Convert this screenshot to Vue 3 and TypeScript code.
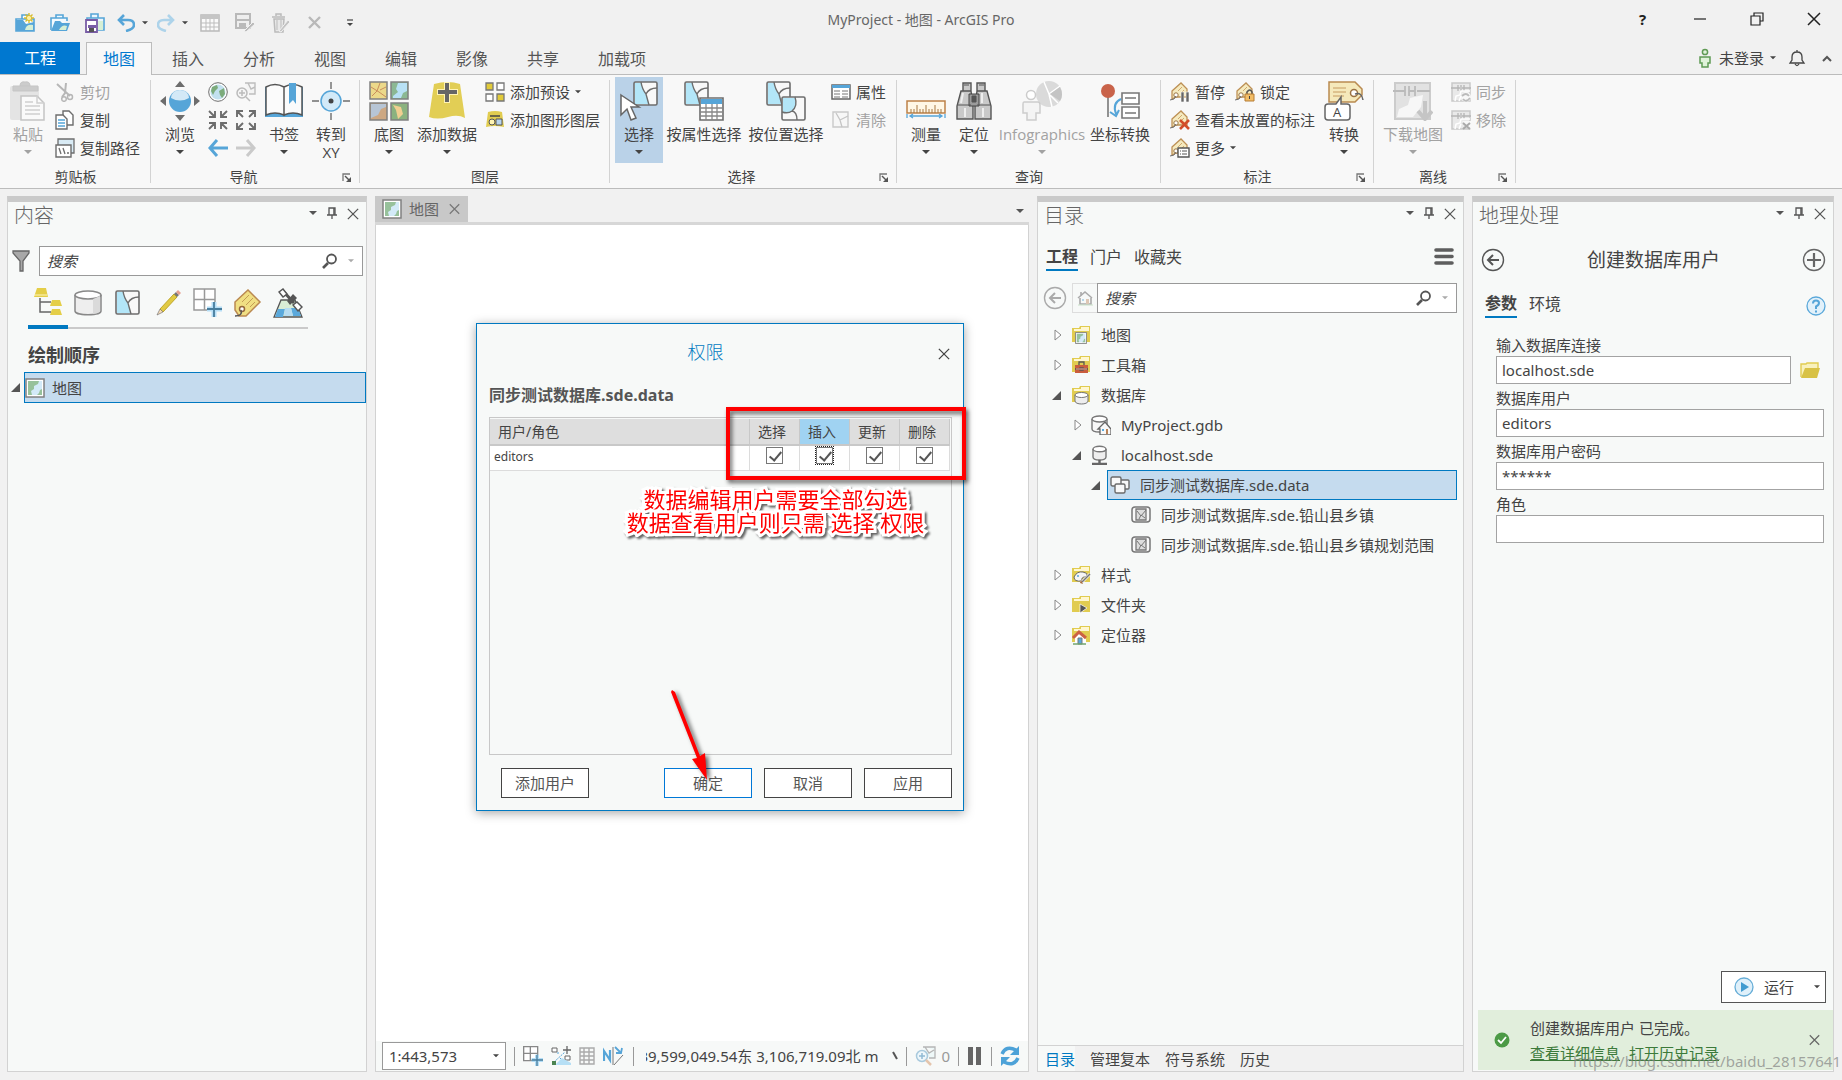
<script setup lang="ts">
import { computed, defineComponent, h, ref } from 'vue'

const B = '#56a5d8'
const G = '#6d6d6d'
const L = '#c9c9c9'
const Y = '#e1cc50'

type IconDef = [number, number, string]

const folder = `<path d="M1 3h7l1-2h10v16H1z" fill="${Y}"/><path d="M3 5h14v-2h-7" fill="none" stroke="#fff7d0" stroke-width="2"/>`
const tag = `<path d="M2 9L11 1l6 6v8H6l-4 2z" fill="#f5eabf" stroke="#bd9055" stroke-width="1.3"/><path d="M8 9l4-4M11 11l3-3" stroke="#cfa86d"/><circle cx="6" cy="13" r="2.2" fill="#fff" stroke="#9b7442"/><path d="M6 14q-1 4-6 4" fill="none" stroke="${G}"/>`
const part = (c: string) => `<rect x="1" y="1" width="23" height="23" rx="1.5" fill="#f8f8f8" stroke="${c}" stroke-width="1.6"/>`
const region = `${part(G)}<path d="M2 2h6q1 6 5 11l3 10H2z" fill="#b3e6f8"/><path d="M8 1q1 7 5 12l3 11M13 13q3-6 11-6" fill="none" stroke="${G}" stroke-width="1.4"/>`
const mapPic = `<rect x="1" y="1" width="18" height="18" fill="#fff" stroke="#808080" stroke-width="1.5"/><path d="M3 3h14v14H3z" fill="#d3eaf8"/><path d="M3 3h11l-1 3-4 2v3l-3 2 1 4H3zM17 11l-2 1-1 3-2 2h5z" fill="#97c19b"/>`
const offline = (c: string) => `<rect x="1" y="1" width="18" height="18" fill="#e9e9e9" stroke="${c}" stroke-width="1.5"/><path d="M0 6h7M13 6h7M7 3v6M10 3v6M13 3v6M7 6h2M11 6h2" stroke="#b5b5b5" stroke-width="1.3"/><path d="M4 19l1-5 4-1 1-4 9 0M8 19l2-5" fill="none" stroke="#fff" stroke-width="1.5"/>`

const icons: Record<string, IconDef> = {
  newProject: [20, 20, `<path d="M7 6V2h6v4M1 6h18v12H1z" fill="#f8fcff" stroke="${B}" stroke-width="1.6"/><path d="M1 7h7l3 4 8-2v9H1z" fill="${B}"/><path d="M10 17q1-6 8-5v5z" fill="#d6efd5"/><path d="M14 0v10M9 5h10M10.500 1.500l7 7M17.500 1.500l-7 7" stroke="#d7bd31" stroke-width="1.4"/><circle cx="14" cy="5" r="2.600" fill="#fff0a5" stroke="#d7bd31"/>`],
  openProject: [20, 20, `<path d="M6 5V2h7v3M1 17V5h16v3" fill="#f3faff" stroke="${B}" stroke-width="1.600"/><path d="M1 18L5 8h5l2 2h8l-3 8z" fill="${B}"/><path d="M9 17q3-6 8-4l-1 4z" fill="#d6efd5"/>`],
  saveProject: [20, 20, `<path d="M6 5V1h7v4M2 5h17v12H2z" fill="#eaf6fd" stroke="${B}" stroke-width="1.600"/><path d="M13 8h5v9h-5z" fill="#d6efd5"/><path d="M1 7h11v12H1z" fill="#fff" stroke="#795da6" stroke-width="1.800"/><path d="M3 12h8v3H3z" fill="#795da6"/><path d="M4 15h5v4H4z" fill="#555"/>`],
  undo: [18, 18, `<path d="M7 1L2 6l5 5M3 6h8q6 0 6 5 0 4-8 6" fill="none" stroke="${B}" stroke-width="2.600"/>`],
  redo: [18, 18, `<path d="M11 1l5 5-5 5M15 6H7Q1 6 1 11q0 4 8 6" fill="none" stroke="#add3ea" stroke-width="2.600"/>`],
  grid: [20, 18, `<path d="M1 1h18v16H1z" fill="#fafafa" stroke="#b9b9b9" stroke-width="1.500"/><path d="M1 1h18v4H1z" fill="#c5c5c5"/><path d="M6 5v12M10 5v12M14 5v12M1 9h18M1 13h18" stroke="#bdbdbd"/>`],
  saveEdit: [20, 20, `<path d="M1 1h14v14H1zM1 7h14" fill="#eee" stroke="#b9b9b9" stroke-width="2"/><path d="M4 10h7v5H4z" fill="#b9b9b9"/><path d="M9 18l9-9 2 2-9 8z" fill="#bbb" stroke="#f1f1f1"/>`],
  trash: [20, 20, `<path d="M2 4h13M6 3V1h5v2M4 6l1 13h8l1-13z" fill="#e8e8e8" stroke="#bbb" stroke-width="1.500"/><path d="M7 7v10M11 7v10" stroke="#bbb"/><path d="M9 18l9-11 2 2-9 10z" fill="#c3c3c3" stroke="#f1f1f1"/>`],
  discard: [14, 14, `<path d="M1 1l11 11M12 1L1 12" stroke="#b9b9b9" stroke-width="2.400"/>`],
  custom: [8, 8, `<path d="M1 1h6" stroke="#444" stroke-width="1.200"/><path d="M1 4h6L4 7z" fill="#444"/>`],
  caret: [8, 5, `<path d="M0 0h8L4 4z" fill="currentColor"/>`],
  min: [14, 14, `<path d="M1 7h12" stroke="#222" stroke-width="1.200"/>`],
  restore: [14, 14, `<path d="M4 4V1h9v8h-3M1 4h9v9H1z" fill="none" stroke="#222" stroke-width="1.200"/>`],
  close: [14, 14, `<path d="M1 1l12 12M13 1L1 13" stroke="currentColor" stroke-width="1.500"/>`],
  user: [16, 20, `<circle cx="8" cy="4" r="2.600" fill="#dff2d9" stroke="#5f9a54" stroke-width="1.500"/><path d="M3 9h10v6h-2v4H5v-4H3z" fill="#dff2d9" stroke="#5f9a54" stroke-width="1.500"/>`],
  bell: [18, 18, `<path d="M9 1v2M2 14h14l-2-3V8q0-5-5-5T4 8v3zM7 15q2 3 4 0" fill="none" stroke="#444" stroke-width="1.300"/>`],
  chevUp: [12, 8, `<path d="M2 7l4-4 4 4" fill="none" stroke="#555" stroke-width="2"/>`],
  paste: [40, 40, `<rect x="2" y="5" width="29" height="34" rx="2" fill="#e4e4e4"/><path d="M5 5h25v5H5zM12 5q0-5 5-4 5-1 5 4" fill="#ccc" stroke="#c5c5c5"/><path d="M13 15h16l7 7v17H13z" fill="#fafafa" stroke="#c4c4c4" stroke-width="1.500"/><path d="M29 15v7h7M17 21h8M17 25h15M17 29h15M17 33h15" fill="none" stroke="#cfcfcf" stroke-width="1.500"/>`],
  cut: [20, 20, `<path d="M2 2l13 12M11 1l-1 10-3 4" fill="none" stroke="#b7b7b7" stroke-width="2"/><circle cx="15" cy="15" r="2.500" fill="none" stroke="#b7b7b7" stroke-width="1.500"/><circle cx="9" cy="17" r="2.300" fill="none" stroke="#b7b7b7" stroke-width="1.500"/>`],
  copy: [20, 20, `<path d="M8 1h6l4 4v10H8z" fill="#fff" stroke="${G}" stroke-width="1.400"/><path d="M1 5h7l4 4v10H1z" fill="#fff" stroke="${G}" stroke-width="1.400"/><path d="M3 10h7M3 13h7M3 16h7" stroke="${B}" stroke-width="1.300"/>`],
  copyPath: [20, 20, `<path d="M3 1h16v14H3z" fill="#d9ebf5" stroke="${G}" stroke-width="1.300"/><path d="M1 7h15v12H1z" fill="#fff" stroke="${G}" stroke-width="1.400"/><path d="M4 10l2 6M8 10l2 6M12 15h2" stroke="${G}" stroke-width="1.300"/>`],
  explore: [40, 40, `<path d="M20 0l5 6H15zM20 40l5-6H15zM0 20l6-5v10zM40 20l-6-5v10z" fill="${G}"/><circle cx="20" cy="20" r="11" fill="${B}"/><path d="M11 17q1-8 9-8t9 8q-9 5-18 0z" fill="#d3e9f7"/>`],
  globe: [20, 20, `<circle cx="10" cy="10" r="9.300" fill="#fff" stroke="${G}"/><circle cx="10" cy="10" r="7.500" fill="#c2e1ef"/><path d="M4 5l5-2 1 3-3 3-2 4-2-4zM11 9l5-3 1 6-3 4-2-3z" fill="#7cab7b"/>`],
  zoomSel: [20, 20, `<path d="M9 1h10v11h-6M12 1l3 6 4-2" fill="#f4f4f4" stroke="#bdbdbd" stroke-width="1.400"/><circle cx="6" cy="11" r="5" fill="#f5f5f5" stroke="#bbb" stroke-width="1.500"/><path d="M3 11h6M6 8v6M10 15l4 4" stroke="#bbb" stroke-width="1.500"/>`],
  zoomIn: [20, 20, `<g fill="none" stroke="${G}" stroke-width="1.900"><path d="M1 1l6 6M7 1v6H1M19 1l-6 6M13 1v6h6M1 19l6-6M1 13h6v6M19 19l-6-6M13 19v-6h6"/></g>`],
  zoomOut: [20, 20, `<g fill="none" stroke="${G}" stroke-width="1.900"><path d="M1 1l6 6M1 7V1h6M19 1l-6 6M13 1h6v6M1 19l6-6M1 13v6h6M19 19l-6-6M13 19h6v-6"/></g>`],
  back: [20, 18, `<path d="M9 1L2 9l7 8M2 9h18" fill="none" stroke="${B}" stroke-width="3"/>`],
  forward: [20, 18, `<path d="M11 1l7 8-7 8M18 9H0" fill="none" stroke="#cacaca" stroke-width="3"/>`],
  book: [40, 40, `<path d="M1 6h38v30H1z" fill="${B}"/><path d="M2 6q9-5 18 0v28q-9-4-18 0zM38 6q-9-5-18 0v28q9-4 18 0z" fill="#fbfbfb" stroke="#555" stroke-width="1.500"/><path d="M25 2h7v21l-3-4-4 4z" fill="${B}"/>`],
  gotoXY: [40, 40, `<circle cx="20" cy="20" r="10" fill="#d3eaf8" stroke="${B}" stroke-width="1.500"/><circle cx="20" cy="20" r="2.500" fill="#444"/><path d="M20 1v7M20 32v7M1 20h7M32 20h7" stroke="${G}" stroke-width="1.400"/>`],
  basemap: [40, 40, `<g stroke="#808080" stroke-width="1.500"><path d="M1 1h17v17H1z" fill="#ecd98a"/><path d="M22 1h17v17H22z" fill="#8bb893"/><path d="M1 22h17v17H1z" fill="#cda883"/><path d="M22 22h17v17H22z" fill="#8bb27f"/></g><path d="M3 15l5-5 3-8M2 6l8 5 7 5M11 9l6-3" fill="none" stroke="#c98d5c"/><path d="M38 2h-9l-2 6 2 3-5 4v2h8l2-5 4-2z" fill="#b8e1f5"/><path d="M2 23h15v3l-5 2-3 6-7 3z" fill="#b7c5d5"/><path d="M24 24l8 2 2 7-5 5-2-9z" fill="#f1cf91"/>`],
  addData: [40, 40, `<path d="M7 3q14-4 26 0l5 34q-7-4-17-1-11 3-19 0z" fill="#e2ce55"/><path d="M20 1v21M10 11h21" stroke="#fff3b3" stroke-width="6"/><path d="M20 2v19M11 11h19" stroke="#666" stroke-width="4"/>`],
  preset: [20, 20, `<g stroke="#777" stroke-width="1.300"><path d="M1 1h7v7H1zM12 12h7v7h-7z" fill="#e1ca39"/><path d="M12 1h7v7h-7zM1 12h7v7H1z" fill="#fff"/></g>`],
  graphic: [20, 18, `<path d="M3 1q7-2 14 0l2 15q-9-2-18 0z" fill="${Y}"/><path d="M5 5h10" stroke="#444" stroke-width="1.500"/><circle cx="7" cy="11" r="3" fill="#fff4b2" stroke="#555"/><path d="M11 8h6v6h-6z" fill="#b9d5ed" stroke="#555"/>`],
  select: [40, 40, `<g transform="translate(14)">${region}</g><path d="M2 14l18 12-8 0 5 11-5 2-4-11-6 6z" fill="#fff" stroke="#666" stroke-width="1.500"/>`],
  selAttr: [40, 40, `${region}<path d="M16 17h23v22H16z" fill="#fff" stroke="${G}" stroke-width="1.600"/><path d="M17 18h21v5H17z" fill="${B}"/><path d="M22 23v16M28 23v16M33 23v16M16 27h23M16 31h23M16 35h23" stroke="#888" stroke-width="1.300"/>`],
  selLoc: [40, 40, `${region}<g transform="translate(15 15)">${part(G)}<path d="M2 2h12q2 9-3 13-4 3-9 1z" fill="#b3e6f8"/><path d="M14 1q3 9-3 14-4 3-10 1M11 15q5 1 5 9" fill="none" stroke="${G}" stroke-width="1.400"/></g>`],
  attributes: [20, 16, `<path d="M1 1h18v14H1z" fill="#fff" stroke="#666" stroke-width="1.500"/><path d="M1 1h18v3H1z" fill="${B}"/><path d="M3 7h6M3 10h6M3 13h6M11 7h6M11 10h6M11 13h6" stroke="#777"/>`],
  clear: [20, 18, `<path d="M2 1h15v15H2z" fill="#f7f7f7" stroke="#c9c9c9" stroke-width="1.400"/><path d="M5 2l4 7 2 7M9 9l8-4" fill="none" stroke="#c5c5c5" stroke-width="1.300"/>`],
  measure: [40, 40, `<path d="M1 20h38v12H1z" fill="#fff7e6" stroke="#bd8148" stroke-width="1.500"/><path d="M5 32v-4M8 32v-4M11 32v-8M14 32v-4M17 32v-4M20 32v-8M23 32v-4M26 32v-4M29 32v-8M32 32v-4M35 32v-4" stroke="#a87943"/><path d="M1 33v4M39 33v4M5 35h30M7 33l-3 2 3 2M33 33l3 2-3 2" fill="none" stroke="${B}" stroke-width="1.300"/>`],
  locate: [40, 40, `<path d="M9 2h8v8H9zM23 2h8v8h-8zM7 10h10l2 15v13H3V25zM23 10h10l4 15v13H21V25z" fill="#c9c9c9" stroke="#555" stroke-width="1.400"/><path d="M15 13h10v12H15z" fill="#9b9b9b" stroke="#444"/><path d="M4 24h13M23 24h13M10 4h5M25 4h5M18 15h4v6h-4z" stroke="#555" fill="#555"/><path d="M9 12l-2 10M11 27v9M28 12v10M29 27v9" stroke="#eee" stroke-width="2"/>`],
  infographic: [40, 40, `<circle cx="27" cy="13" r="13" fill="#dadada"/><path d="M27 13L22 1M27 13l11-8M27 13l9 9M27 13l3 13" stroke="#fff" stroke-width="1.500"/><path d="M28 13l10-7q4 8 0 14z" fill="#c4c4c4"/><circle cx="9" cy="14" r="4.500" fill="#fff" stroke="#ccc" stroke-width="1.500"/><path d="M2 21h14q2 0 2 3v8h-4v7H5v-7H1v-9q0-2 1-2z" fill="#f4f4f4" stroke="#ccc" stroke-width="1.500"/>`],
  coord: [40, 40, `<path d="M8 10v26" stroke="#666" stroke-width="1.400"/><circle cx="8" cy="10" r="7" fill="#c9634a"/><path d="M22 12h17v11H22zM22 26h17v11H22z" fill="#fff" stroke="#777" stroke-width="1.600"/><path d="M25 17h11M25 32h11" stroke="#777" stroke-width="1.500"/><path d="M21 18q-9 4-5 15M10 31l6 4 3-6" fill="none" stroke="${B}" stroke-width="2"/>`],
  pauseLabel: [20, 20, `${tag}<path d="M11 10h3v10h-3zM16 10h3v10h-3z" fill="#666" stroke="#fff" stroke-width=".6"/>`],
  lockLabel: [20, 20, `${tag}<path d="M12 12v-2q3-4 5 0v2" fill="none" stroke="#555" stroke-width="1.500"/><path d="M10 12h9v7h-9z" fill="#f2bd67" stroke="#b67c35"/><path d="M14.500 14v3" stroke="#444"/>`],
  unplaced: [20, 20, `${tag}<path d="M10 10l9 9M19 10l-9 9" stroke="#d24d28" stroke-width="2.600"/>`],
  moreLabel: [20, 20, `${tag}<path d="M8 10h11v9H8z" fill="#fff" stroke="#555" stroke-width="1.400"/><path d="M10 13h1M12 13h5M10 16h1M12 16h5" stroke="#555"/>`],
  convert: [40, 40, `<path d="M5 1h26l7 7v6l-7 7H5z" fill="#f5e9bb" stroke="#b98a50" stroke-width="1.500"/><path d="M9 7h13M9 11h13M9 15h11" stroke="#c69b61"/><circle cx="30" cy="12" r="3.500" fill="#fff" stroke="#9c7243" stroke-width="1.500"/><path d="M31 13q7-2 8 6" fill="none" stroke="#666" stroke-width="1.500"/><path d="M4 23h8l5-7v7h6q3 0 3 3v10q0 3-3 3H4q-3 0-3-3V26q0-3 3-3z" fill="#fff" stroke="#666" stroke-width="1.500"/><text x="13" y="36" font-family="Open Sans" font-size="13" text-anchor="middle" fill="#444">A</text>`],
  download: [40, 40, `<rect x="2" y="2" width="35" height="36" fill="#e2e2e2" stroke="#ccc" stroke-width="2"/><path d="M0 10h12M24 10h13M12 5v10M16 5v10M22 5v10M16 10h6" stroke="#bbb" stroke-width="1.800"/><path d="M4 36l2-8 9-4 2-7 13-3-2 12-8 10z" fill="#f7f7f7"/><path d="M32 20v16M25 30l7 8 7-8" fill="none" stroke="#c5c5c5" stroke-width="4"/>`],
  sync: [20, 20, `${offline(L)}<circle cx="15" cy="15" r="5" fill="#f8f8f8"/><path d="M11 14q4-4 7 0M19 16q-4 5-7 1" fill="none" stroke="#bbb" stroke-width="1.800"/>`],
  remove: [20, 20, `${offline(L)}<path d="M11 11l9 9V11z" fill="#f8f8f8"/><path d="M12 13l7 6M19 13l-7 6" stroke="#aaa" stroke-width="2"/>`],
  launcher: [9, 9, `<path d="M8 1H1v7" fill="none" stroke="#777" stroke-width="1.300"/><path d="M3 3l4 4" stroke="#555" stroke-width="1.500"/><path d="M9 4v5H4z" fill="#555"/>`],
  pin: [10, 13, `<path d="M2 1h6v7H2zM0 8h10M5 8v4" fill="none" stroke="#555" stroke-width="1.300"/><path d="M7 1v7" stroke="#555" stroke-width="1.500"/>`],
  filter: [18, 22, `<path d="M1 1h16v2l-6 8v10H8V11L1 3z" fill="#a8a8a8" stroke="#666" stroke-width="1.300"/>`],
  search: [16, 16, `<circle cx="9.500" cy="6" r="4.500" fill="none" stroke="#555" stroke-width="1.800"/><path d="M6 10l-5 5" stroke="#555" stroke-width="2.600"/>`],
  drawOrder: [30, 30, `<path d="M4 1h9l2 9H1zM19 13h8l2 6H17zM19 22h8l2 6H17z" fill="#e4ce48"/><path d="M1 8h13" stroke="#fff7bf"/><path d="M7 11v14h11M7 15h11" fill="none" stroke="#666" stroke-width="1.500"/>`],
  cylinder: [30, 30, `<path d="M2 7v16c0 5 26 5 26 0V7" fill="#eee" stroke="#888" stroke-width="1.500"/><ellipse cx="15" cy="7" rx="13" ry="4" fill="#fff" stroke="#888" stroke-width="1.500"/><path d="M20 11v15q8-1 7-4V8z" fill="#dadada"/>`],
  selTab: [26, 26, region],
  pencil: [26, 28, `<path d="M5 20L19 5l3 3L8 23z" fill="#e1ca43" stroke="#bfa729"/><path d="M19 5l2-2 3 3-2 2z" fill="#777"/><path d="M21 3l2-2 3 3-2 2z" fill="#e7a090"/><path d="M5 20l-3 6 6-3z" fill="#f7dbb6" stroke="#777" stroke-width=".7"/>`],
  snap: [30, 30, `<path d="M1 1h21v21H1zM11.500 1v21M1 11.500h21" fill="#fff" stroke="#999" stroke-width="1.500"/><path d="M21 14v15M14 21h15" stroke="#b5def6" stroke-width="5"/><path d="M21 14v15M14 21h15" stroke="#477d9d" stroke-width="1.800"/>`],
  tagBig: [28, 28, `<path d="M1 13L14 1l12 12-14 14H5l-4-6z" fill="#f0df83" stroke="#ba8951" stroke-width="1.500"/><path d="M8 13l7-7M12 16l7-7M16 18l5-5" stroke="#c39d56"/><circle cx="8" cy="20" r="2.500" fill="#fff" stroke="#94683c" stroke-width="1.500"/><path d="M7 21q2 6-6 6" fill="none" stroke="#555" stroke-width="1.400"/>`],
  satellite: [30, 30, `<path d="M8 12h14l7 17H1z" fill="#d9ecd5" stroke="#555" stroke-width="1.300"/><path d="M5 21h7l-2 8H2zM18 20h7l3 8h-8z" fill="#5aa9dc"/><path d="M12 20h6l2 8H11z" fill="#b6dcf1"/><path d="M10 3l11 12" stroke="#555" stroke-width="3"/><path d="M14 13l6-7 4 4-7 7z" fill="#555"/><path d="M6 4l4-3 4 5-4 3zM20 17l4-3 5 5-4 4z" fill="#fff" stroke="#555" stroke-width="1.500"/>`],
  map: [20, 20, mapPic],
  opened: [9, 9, `<path d="M9 0v9H0z" fill="#555"/>`],
  closed: [9, 12, `<path d="M1 1l6 5-6 5z" fill="#fff" stroke="#888"/>`],
  fMap: [20, 20, `${folder}<g transform="translate(4 7) scale(.6)">${mapPic}</g>`],
  fTool: [20, 20, `${folder}<path d="M4 10h13v8H4z" fill="#c95d3e"/><path d="M8 10V7h5v3M4 14h5M12 14h5M9 13h3v2H9z" fill="none" stroke="#555" stroke-width="1.300"/><path d="M5 14h11" stroke="#efaa92"/>`],
  fDb: [20, 20, `${folder}<path d="M4 10v6c0 4 13 4 13 0v-6" fill="#eee" stroke="#777"/><ellipse cx="10.500" cy="10" rx="6.500" ry="2.500" fill="#fff" stroke="#777"/>`],
  gdb: [20, 20, `<path d="M1 4v10c0 4 15 4 15 0V4" fill="#f8f8f8" stroke="#777" stroke-width="1.400"/><ellipse cx="8.500" cy="4" rx="7.500" ry="3" fill="#fff" stroke="#777" stroke-width="1.400"/><path d="M7 14l7-7 6 7v6H9v-6z" fill="#f8f8f8" stroke="#666" stroke-width="1.300"/><path d="M11 14h2v2h-2z" fill="#58a9db"/><path d="M15 14h2v5h-2z" fill="#b98358"/>`],
  sde: [20, 20, `<path d="M2 4v8c0 4 13 4 13 0V4" fill="#eee" stroke="#777" stroke-width="1.400"/><ellipse cx="8.500" cy="4" rx="6.500" ry="2.800" fill="#fff" stroke="#777" stroke-width="1.400"/><path d="M8.500 15v3M1 19h15" stroke="#666" stroke-width="2.400"/>`],
  dataset: [20, 18, `<g fill="#f8f8f8" stroke="#6b6b6b" stroke-width="1.400"><rect x="10" y="4" width="9" height="9" rx="1"/><rect x="1" y="1" width="10" height="9" rx="1.500"/><rect x="5" y="8" width="10" height="9" rx="1.500"/></g>`],
  feature: [20, 18, `<rect x="1" y="1" width="18" height="15" rx="3" fill="#f8f8f8" stroke="#777" stroke-width="1.500"/><path d="M5 3h10v11H5z" fill="#ddd" stroke="#777" stroke-width="1.300"/><path d="M6 5l4 5 5-6M8 13l2-4 4 3" fill="none" stroke="#777"/>`],
  fStyle: [20, 20, `${folder}<path d="M3 12q3-6 9-5 7 2 2 5-4 0-3 4-8 1-8-4z" fill="#f5f5f5" stroke="#666"/><path d="M10 18l9-9" stroke="#eee" stroke-width="3"/><path d="M11 17l8-8" stroke="#777" stroke-width="1.500"/><circle cx="7" cy="11" r="1" fill="${B}"/><path d="M10 15l2 4-3-1z" fill="#a66b3e"/>`],
  fFolder: [20, 20, `${folder}<path d="M9 9l7 4-7 5z" fill="#555" stroke="#fff" stroke-width=".7"/>`],
  fLocator: [20, 20, `${folder}<path d="M3 14l6-7 6 7v5H4v-5z" fill="#fff"/><path d="M2 13l6-6 7 6" fill="none" stroke="#cc6143" stroke-width="3"/><path d="M7 13h4v6H7z" fill="#58a9db" stroke="#777"/><path d="M2 19h13" stroke="#71a570" stroke-width="1.500"/>`],
  circleBack: [24, 24, `<circle cx="12" cy="12" r="10.500" fill="none" stroke="currentColor" stroke-width="1.400"/><path d="M12 7l-5 5 5 5M7 12h11" fill="none" stroke="currentColor" stroke-width="2"/>`],
  circlePlus: [24, 24, `<circle cx="12" cy="12" r="10.500" fill="none" stroke="#666" stroke-width="1.400"/><path d="M12 5v14M5 12h14" stroke="#666" stroke-width="2.200"/>`],
  home: [16, 16, `<path d="M3 8v6h11V8M1 8l7-6 7 6M4 2v4" fill="none" stroke="#aaa" stroke-width="1.600"/><path d="M9 9h3v5H9z" fill="#ddc7b5"/><path d="M5 9h2v2H5z" fill="#b5d6e8"/><path d="M1 15h15" stroke="#c9e2c8"/>`],
  menu: [20, 18, `<path d="M2 2h16M2 8.500h16M2 15h16" stroke="#5e5e5e" stroke-width="3.600" stroke-linecap="round"/>`],
  help: [20, 20, `<circle cx="10" cy="10" r="9" fill="#e2f1fa" stroke="#5aa8da" stroke-width="1.300"/><path d="M7 7.500q0-3 3-3t3 2.500q0 2-3 3.500v2.500M10 14.500v2" fill="none" stroke="#56a5d8" stroke-width="2"/>`],
  openFolder: [20, 16, `<path d="M1 15V2h5l1-1h11v5" fill="#f8f1bd" stroke="${Y}" stroke-width="1.400"/><path d="M1 16L5 6h15l-3 10z" fill="#d8c246"/>`],
  play: [20, 20, `<circle cx="10" cy="10" r="9" fill="#dff0fa" stroke="#66add7" stroke-width="1.300"/><path d="M7 5l8 5-8 5z" fill="#409bd0"/>`],
  success: [16, 16, `<circle cx="8" cy="8" r="7.500" fill="#4c9a46"/><path d="M4 8l3 3 5-6" fill="none" stroke="#fff" stroke-width="1.800"/>`],
  constraint: [20, 20, `<path d="M1 2h5v4H1zM14 10h5v4h-5z" fill="#fff" stroke="#666"/><path d="M12 4h8M16 0v8" stroke="#666" stroke-width="1.300"/><path d="M3 16L14 6M7 6v2M9 12l3 3" stroke="${B}" stroke-dasharray="2 1"/><path d="M5 18l6-6 9 5v2H5z" fill="#b6dff5"/><path d="M1 15h4v4H1z" fill="#4b8450"/>`],
  gridTool: [16, 18, `<path d="M1 1h14v16H1zM5 1v16M10 1v16M1 5h14M1 9h14M1 13h14" fill="none" stroke="#aaa" stroke-width="1.400"/>`],
  north: [22, 20, `<path d="M1 15V5l6 9V4" fill="none" stroke="${B}" stroke-width="2.200"/><path d="M10 1v18M11 19L20 9" stroke="#777"/><path d="M12 1l5 5M13 7h5l1-5" fill="none" stroke="${B}" stroke-width="1.800"/>`],
  tick: [6, 10, `<path d="M1 1l4 7" stroke="#555" stroke-width="2"/>`],
  selCount: [22, 20, `<path d="M8 1h12v11h-6M10 1l4 6 5-3" fill="#eef8f8" stroke="#b5b5b5" stroke-width="1.300"/><circle cx="7" cy="10" r="5.500" fill="#eef7fb" stroke="#a9cadd" stroke-width="1.500"/><path d="M4 10h6M7 7v6" stroke="#91bbd5" stroke-width="1.500"/><path d="M11 14l5 5" stroke="#e4c5ad" stroke-width="2.500"/>`],
  pause: [16, 18, `<path d="M1 0h5v18H1zM9 0h5v18H9z" fill="#666"/>`],
  refresh: [20, 20, `<path d="M2 8q4-9 14-4M18 12q-4 9-14 4" fill="none" stroke="#4da2d8" stroke-width="3.400"/><path d="M19 0v9h-9zM1 20v-9h9z" fill="#4da2d8"/>`]
}

const Icon = defineComponent({
  props: { name: { type: String, required: true } },
  setup: (props) => () => {
    const [w, ht, body] = icons[props.name]
    return h('svg', { width: w, height: ht, viewBox: `0 0 ${w} ${ht}`, innerHTML: body, 'aria-hidden': 'true' })
  }
})

interface Big { kind: 'big'; icon: string; label: string; size: string; caret?: boolean; off?: boolean; on?: boolean; line2?: string }
interface Small { icon: string; label: string; caret?: boolean; off?: boolean }
interface Rows { kind: 'rows'; rows: Small[][] }
interface Pad { kind: 'pad'; icons: string[] }
interface Group { id: string; label: string; launcher?: boolean; parts: (Big | Rows | Pad)[] }

const groups: Group[] = [
  { id: 'clipboard', label: '剪贴板', parts: [
    { kind: 'big', icon: 'paste', label: '粘贴', size: 's', caret: true, off: true },
    { kind: 'rows', rows: [[{ icon: 'cut', label: '剪切', off: true }], [{ icon: 'copy', label: '复制' }], [{ icon: 'copyPath', label: '复制路径' }]] }
  ] },
  { id: 'navigate', label: '导航', launcher: true, parts: [
    { kind: 'big', icon: 'explore', label: '浏览', size: 's', caret: true },
    { kind: 'pad', icons: ['globe', 'zoomSel', 'zoomIn', 'zoomOut', 'back', 'forward'] },
    { kind: 'big', icon: 'book', label: '书签', size: 's', caret: true },
    { kind: 'big', icon: 'gotoXY', label: '转到', line2: 'XY', size: 's' }
  ] },
  { id: 'layers', label: '图层', parts: [
    { kind: 'big', icon: 'basemap', label: '底图', size: 's', caret: true },
    { kind: 'big', icon: 'addData', label: '添加数据', size: 'm', caret: true },
    { kind: 'rows', rows: [[{ icon: 'preset', label: '添加预设', caret: true }], [{ icon: 'graphic', label: '添加图形图层' }]] }
  ] },
  { id: 'selection', label: '选择', launcher: true, parts: [
    { kind: 'big', icon: 'select', label: '选择', size: 's', caret: true, on: true },
    { kind: 'big', icon: 'selAttr', label: '按属性选择', size: 'l' },
    { kind: 'big', icon: 'selLoc', label: '按位置选择', size: 'l' },
    { kind: 'rows', rows: [[{ icon: 'attributes', label: '属性' }], [{ icon: 'clear', label: '清除', off: true }]] }
  ] },
  { id: 'inquiry', label: '查询', parts: [
    { kind: 'big', icon: 'measure', label: '测量', size: 's', caret: true },
    { kind: 'big', icon: 'locate', label: '定位', size: 's', caret: true },
    { kind: 'big', icon: 'infographic', label: 'Infographics', size: 'xl', caret: true, off: true },
    { kind: 'big', icon: 'coord', label: '坐标转换', size: 'm' }
  ] },
  { id: 'labeling', label: '标注', launcher: true, parts: [
    { kind: 'rows', rows: [[{ icon: 'pauseLabel', label: '暂停' }, { icon: 'lockLabel', label: '锁定' }], [{ icon: 'unplaced', label: '查看未放置的标注' }], [{ icon: 'moreLabel', label: '更多', caret: true }]] },
    { kind: 'big', icon: 'convert', label: '转换', size: 's', caret: true }
  ] },
  { id: 'offline', label: '离线', launcher: true, parts: [
    { kind: 'big', icon: 'download', label: '下载地图', size: 'm', caret: true, off: true },
    { kind: 'rows', rows: [[{ icon: 'sync', label: '同步', off: true }], [{ icon: 'remove', label: '移除', off: true }]] }
  ] }
]

const tabs = ['插入', '分析', '视图', '编辑', '影像', '共享', '加载项']
const listTabs = ['drawOrder', 'cylinder', 'selTab', 'pencil', 'snap', 'tagBig', 'satellite']

interface Node { label: string; icon: string; level: number; state?: 'opened' | 'closed'; selected?: boolean }
const tree: Node[] = [
  { label: '地图', icon: 'fMap', level: 0, state: 'closed' },
  { label: '工具箱', icon: 'fTool', level: 0, state: 'closed' },
  { label: '数据库', icon: 'fDb', level: 0, state: 'opened' },
  { label: 'MyProject.gdb', icon: 'gdb', level: 1, state: 'closed' },
  { label: 'localhost.sde', icon: 'sde', level: 1, state: 'opened' },
  { label: '同步测试数据库.sde.data', icon: 'dataset', level: 2, state: 'opened', selected: true },
  { label: '同步测试数据库.sde.铅山县乡镇', icon: 'feature', level: 3 },
  { label: '同步测试数据库.sde.铅山县乡镇规划范围', icon: 'feature', level: 3 },
  { label: '样式', icon: 'fStyle', level: 0, state: 'closed' },
  { label: '文件夹', icon: 'fFolder', level: 0, state: 'closed' },
  { label: '定位器', icon: 'fLocator', level: 0, state: 'closed' }
]

const rights = ref([
  { label: '选择', granted: true },
  { label: '插入', granted: true },
  { label: '更新', granted: true },
  { label: '删除', granted: true }
])
const activeRight = ref('插入')

const connection = ref('localhost.sde')
const dbUser = ref('editors')
const password = ref('123456')
const masked = computed(() => '*'.repeat(password.value.length))
const role = ref('')
const scale = ref('1:443,573')
</script>

<template>
  <div class="app">
    <header class="titlebar">
      <div class="quick">
        <button aria-label="新建工程"><Icon name="newProject" /></button>
        <button aria-label="打开工程"><Icon name="openProject" /></button>
        <button aria-label="保存工程"><Icon name="saveProject" /></button>
        <button class="split" aria-label="撤消"><Icon name="undo" /><Icon name="caret" class="mini" /></button>
        <button class="split" aria-label="恢复"><Icon name="redo" /><Icon name="caret" class="mini" /></button>
        <button aria-label="属性表"><Icon name="grid" /></button>
        <button aria-label="保存编辑"><Icon name="saveEdit" /></button>
        <button aria-label="删除编辑"><Icon name="trash" /></button>
        <button aria-label="取消"><Icon name="discard" /></button>
        <button aria-label="自定义"><Icon name="custom" /></button>
      </div>
      <h1>MyProject - 地图 - ArcGIS Pro</h1>
      <div class="window-buttons">
        <button class="q" aria-label="帮助">?</button>
        <button aria-label="最小化"><Icon name="min" /></button>
        <button aria-label="还原"><Icon name="restore" /></button>
        <button aria-label="关闭"><Icon name="close" /></button>
      </div>
    </header>

    <nav class="tabs">
      <button class="project">工程</button>
      <button class="active">地图</button>
      <button v-for="t in tabs" :key="t" class="tab">{{ t }}</button>
      <div class="account">
        <button><Icon name="user" /><span>未登录</span><Icon name="caret" class="mini" /></button>
        <button aria-label="通知"><Icon name="bell" /></button>
        <button aria-label="折叠功能区"><Icon name="chevUp" /></button>
      </div>
    </nav>

    <section class="ribbon">
      <div v-for="g in groups" :key="g.id" class="group" :class="g.id">
        <div class="parts">
          <template v-for="(p, i) in g.parts" :key="i">
            <button v-if="p.kind === 'big'" class="big" :class="[p.size, { off: p.off, on: p.on }]">
              <Icon :name="p.icon" />
              <span>{{ p.label }}</span>
              <span v-if="p.line2" class="line2">{{ p.line2 }}</span>
              <Icon v-if="p.caret" name="caret" class="caret" />
            </button>
            <div v-else-if="p.kind === 'rows'" class="rows">
              <div v-for="(r, j) in p.rows" :key="j" class="row">
                <button v-for="s in r" :key="s.label" class="small" :class="{ off: s.off }">
                  <Icon :name="s.icon" /><span>{{ s.label }}</span><Icon v-if="s.caret" name="caret" class="mini" />
                </button>
              </div>
            </div>
            <div v-else class="pad">
              <button v-for="n in p.icons" :key="n" :aria-label="n"><Icon :name="n" /></button>
            </div>
          </template>
        </div>
        <div class="caption">
          <span>{{ g.label }}</span>
          <button v-if="g.launcher" aria-label="选项"><Icon name="launcher" /></button>
        </div>
      </div>
    </section>

    <main class="work">
      <section class="pane contents">
        <header class="pane-head">
          <h2>内容</h2>
          <button aria-label="菜单"><Icon name="caret" /></button>
          <button aria-label="固定"><Icon name="pin" /></button>
          <button aria-label="关闭"><Icon name="close" /></button>
        </header>
        <div class="filter-row">
          <Icon name="filter" />
          <label class="search"><input type="text" placeholder="搜索" aria-label="搜索内容" /><Icon name="search" /><Icon name="caret" class="dim mini" /></label>
        </div>
        <div class="list-tabs">
          <button v-for="(n, i) in listTabs" :key="n" :class="{ active: i === 0 }" :aria-label="n"><Icon :name="n" /></button>
        </div>
        <h3>绘制顺序</h3>
        <div class="toc-item">
          <Icon name="opened" />
          <button><Icon name="map" /><span>地图</span></button>
        </div>
      </section>

      <section class="mapview">
        <div class="view-tabs">
          <div class="view-tab"><Icon name="map" /><span>地图</span><button aria-label="关闭地图"><Icon name="close" /></button></div>
          <button class="views" aria-label="视图列表"><Icon name="caret" /></button>
        </div>
        <div class="canvas"></div>
        <footer class="status">
          <label class="scale">
            <select v-model="scale" aria-label="比例尺"><option>1:443,573</option></select>
            <Icon name="caret" class="mini" />
          </label>
          <i></i>
          <div class="tools">
            <button aria-label="捕捉"><svg width="20" height="20" viewBox="0 0 30 30"><path d="M1 1h21v21H1zM11 1v21M1 11h21" fill="#fff" stroke="#888" stroke-width="2" /><path d="M21 13v17M13 21h17" stroke="#b5def6" stroke-width="6" /><path d="M21 13v17M13 21h17" stroke="#477d9d" stroke-width="2" /></svg></button>
            <button aria-label="约束"><Icon name="constraint" /></button>
            <button aria-label="格网"><Icon name="gridTool" /></button>
            <button aria-label="校正"><Icon name="north" /></button>
          </div>
          <i></i>
          <div class="coords"><span>39,599,049.54东 3,106,719.09北 m</span></div>
          <Icon name="tick" />
          <i></i>
          <button class="count"><Icon name="selCount" /><span>0</span></button>
          <i></i>
          <button aria-label="暂停绘制"><Icon name="pause" /></button>
          <i></i>
          <button aria-label="刷新"><Icon name="refresh" /></button>
        </footer>

        <div class="dialog" role="dialog" aria-label="权限">
          <header><h2>权限</h2><button aria-label="关闭对话框"><Icon name="close" /></button></header>
          <h3>同步测试数据库.sde.data</h3>
          <div class="table-box">
            <table>
              <thead>
                <tr>
                  <th class="name">用户/角色</th>
                  <th v-for="r in rights" :key="r.label" :class="{ hot: r.label === activeRight }">{{ r.label }}</th>
                </tr>
              </thead>
              <tbody>
                <tr>
                  <td class="name">editors</td>
                  <td v-for="r in rights" :key="r.label"><input v-model="r.granted" type="checkbox" :aria-label="r.label" :class="{ focus: r.label === activeRight }" /></td>
                </tr>
              </tbody>
            </table>
          </div>
          <footer>
            <button class="add">添加用户</button>
            <button class="ok">确定</button>
            <button>取消</button>
            <button>应用</button>
          </footer>
          <div class="mark-box"></div>
          <p class="note">数据编辑用户需要全部勾选<br />数据查看用户则只需 选择 权限</p>
          <svg class="arrow" width="60" height="110" viewBox="0 0 60 110"><path d="M9 10L10 8L13 10L38 74L43 71L45 98L30 77L35 76Z" fill="#f00" /></svg>
        </div>
      </section>

      <section class="pane catalog">
        <header class="pane-head">
          <h2>目录</h2>
          <button aria-label="菜单"><Icon name="caret" /></button>
          <button aria-label="固定"><Icon name="pin" /></button>
          <button aria-label="关闭"><Icon name="close" /></button>
        </header>
        <div class="sub-tabs">
          <button class="active">工程</button><button>门户</button><button>收藏夹</button>
          <button class="menu" aria-label="菜单"><Icon name="menu" /></button>
        </div>
        <div class="catalog-search">
          <button class="prev" aria-label="返回"><Icon name="circleBack" /></button>
          <button class="home" aria-label="主页"><Icon name="home" /></button>
          <label class="search"><input type="text" placeholder="搜索" aria-label="搜索工程" /><Icon name="search" /><Icon name="caret" class="dim mini" /></label>
        </div>
        <ul class="tree">
          <li v-for="n in tree" :key="n.label" :class="'l' + n.level">
            <span class="twist" :class="n.state"><Icon v-if="n.state" :name="n.state" /></span>
            <button :class="{ selected: n.selected }"><Icon :name="n.icon" /><span>{{ n.label }}</span></button>
          </li>
        </ul>
        <footer class="dock-tabs">
          <button class="active">目录</button><button>管理复本</button><button>符号系统</button><button>历史</button>
        </footer>
      </section>

      <section class="pane geo">
        <header class="pane-head">
          <h2>地理处理</h2>
          <button aria-label="菜单"><Icon name="caret" /></button>
          <button aria-label="固定"><Icon name="pin" /></button>
          <button aria-label="关闭"><Icon name="close" /></button>
        </header>
        <div class="tool-head">
          <button aria-label="返回"><Icon name="circleBack" /></button>
          <h3>创建数据库用户</h3>
          <button aria-label="添加"><Icon name="circlePlus" /></button>
        </div>
        <div class="sub-tabs">
          <button class="active">参数</button><button>环境</button>
          <button class="menu" aria-label="帮助"><Icon name="help" /></button>
        </div>
        <form class="params" @submit.prevent>
          <label for="conn">输入数据库连接</label>
          <div class="with-browse"><input id="conn" v-model="connection" type="text" /><button type="button" aria-label="浏览文件夹"><Icon name="openFolder" /></button></div>
          <label for="user">数据库用户</label>
          <input id="user" v-model="dbUser" type="text" />
          <label for="pwd">数据库用户密码</label>
          <input id="pwd" :value="masked" type="text" />
          <label for="role">角色</label>
          <input id="role" v-model="role" type="text" />
        </form>
        <div class="run-row">
          <button class="run"><Icon name="play" /><span>运行</span><Icon name="caret" class="mini" /></button>
        </div>
        <div class="done">
          <Icon name="success" />
          <div>
            <p>创建数据库用户 已完成。</p>
            <p class="links"><a href="#details">查看详细信息</a><a href="#history">打开历史记录</a></p>
          </div>
          <button aria-label="关闭消息"><Icon name="close" /></button>
        </div>
      </section>
    </main>
    <span class="watermark">https://blog.csdn.net/baidu_28157641</span>
  </div>
</template>

<style>
body {
  margin: 0;
  background: #f1f1f1;
}
</style>

<style scoped>
* {
  box-sizing: border-box;
}
.app {
  position: relative;
  display: flex;
  flex-direction: column;
  height: 100vh;
  overflow: hidden;
  background: #f1f1f1;
  color: #444;
  font: 15px/20px "Noto Sans", "Noto Sans CJK SC", sans-serif;
}
button {
  display: flex;
  align-items: center;
  justify-content: center;
  margin: 0;
  padding: 0;
  border: 0;
  background: none;
  color: inherit;
  font: inherit;
  white-space: nowrap;
}
svg {
  display: block;
  flex: none;
}
h1, h2, h3, p, ul {
  margin: 0;
  padding: 0;
  font-weight: 400;
}
.mini {
  width: 6px;
  height: 4px;
}
.dim {
  color: #aaa;
}

.titlebar {
  display: grid;
  grid-template-columns: 1fr auto 1fr;
  align-items: center;
  height: 42px;
  flex: none;
}
.titlebar h1 {
  padding-bottom: 2px;
  color: #666;
  font-size: 14px;
}
.quick {
  display: flex;
  padding-left: 7px;
}
.quick button {
  width: 35px;
  height: 40px;
  padding-top: 4px;
}
.quick .split {
  width: 40px;
  gap: 7px;
}
.window-buttons {
  display: flex;
  align-self: start;
  justify-content: flex-end;
  height: 38px;
  color: #222;
}
.window-buttons button {
  width: 57px;
}
.window-buttons .q {
  font-weight: 700;
}

.tabs {
  display: flex;
  flex: none;
  gap: 1px;
  height: 33px;
  border-bottom: 1px solid #bcbcbc;
  font-size: 16px;
}
.tabs .project {
  width: 80px;
  background: #0078d0;
  color: #fff;
}
.tabs .active {
  width: 66px;
  height: 33px;
  margin-left: 5px;
  border: 1px solid #bcbcbc;
  border-bottom: 0;
  background: #f8f8f8;
  color: #0078d0;
}
.tabs .tab {
  padding: 2px 19px 0;
  color: #555;
}
.account {
  display: flex;
  align-items: center;
  gap: 15px;
  margin-left: auto;
  padding-right: 9px;
  font-size: 15px;
}
.account button:first-child {
  gap: 6px;
}
.account button:nth-child(2) {
  margin-left: -3px;
}

.ribbon {
  display: flex;
  flex: none;
  height: 114px;
  border-bottom: 1px solid #bcbcbc;
  background: #f8f8f8;
}
.group {
  position: relative;
  display: flex;
  flex: none;
  flex-direction: column;
  padding-left: 5px;
}
.group::after {
  position: absolute;
  top: 5px;
  right: 0;
  width: 1px;
  height: 103px;
  background: #d3d3d3;
  content: "";
}
.clipboard { width: 151px; }
.navigate { width: 209px; }
.layers { width: 250px; }
.selection { width: 287px; }
.inquiry { width: 264px; }
.labeling { width: 213px; padding-left: 9px; }
.offline { width: 142px; }
.parts {
  display: flex;
  height: 92px;
  padding-top: 2px;
}
.big {
  flex-direction: column;
  justify-content: flex-start;
  height: 86px;
  padding-top: 4px;
  font-family: "Open Sans", "Noto Sans CJK SC", sans-serif;
}
.big.s { width: 48px; }
.big.m { width: 68px; }
.big.l { width: 82px; }
.big.xl { width: 88px; }
.big span {
  margin-top: 3px;
}
.big .line2 {
  margin-top: -2px;
}
.big .caret {
  margin-top: 6px;
}
.big.on {
  background: #bad2e8;
}
.off {
  color: #a2a2a2;
}
.rows {
  padding: 1px 0 0 4px;
}
.row {
  display: flex;
  gap: 10px;
  height: 28px;
}
.small {
  gap: 5px;
}
.pad {
  display: grid;
  grid-template-columns: 28px 28px;
  grid-auto-rows: 28px;
  padding-top: 1px;
}
.navigate .big:last-child {
  width: 46px;
}
.labeling .rows {
  width: 150px;
  padding-left: 0;
}
.clipboard .big {
  width: 46px;
}
.caption {
  display: flex;
  justify-content: center;
  padding-right: 5px;
  font-size: 14px;
}
.caption span {
  flex: 1;
  text-align: center;
}
.caption button {
  width: 9px;
  margin: 0 4px 0 11px;
}

.work {
  display: flex;
  flex: 1;
  gap: 8px;
  min-height: 0;
  padding: 7px 8px 8px 7px;
}
.pane {
  display: flex;
  flex: none;
  flex-direction: column;
  min-height: 0;
  border: 1px solid #d2d2d2;
  border-top: 6px solid #cacaca;
  background: #f7f9f8;
}
.contents { width: 360px; }
.catalog { width: 427px; }
.geo { width: 362px; }
.pane-head {
  display: flex;
  gap: 10px;
  align-items: flex-start;
  height: 31px;
  flex: none;
  padding: 0 7px 0 6px;
  color: #555;
}
.pane-head h2 {
  flex: 1;
  color: #666;
  font-size: 20px;
  font-weight: 300;
  line-height: 28px;
}
.pane-head button {
  height: 23px;
}
.pane-head svg {
  max-width: 12px;
}
.filter-row {
  display: flex;
  gap: 9px;
  align-items: center;
  margin: 13px 3px 0 4px;
}
.search {
  display: flex;
  flex: 1;
  gap: 10px;
  align-items: center;
  height: 30px;
  padding: 0 8px 0 7px;
  border: 1px solid #999;
  background: #fff;
}
.search input {
  flex: 1;
  min-width: 0;
  padding: 0;
  border: 0;
  outline: 0;
  font: inherit;
  font-style: italic;
}
.search input::placeholder {
  color: #444;
  opacity: 1;
}
.list-tabs {
  display: flex;
  align-self: flex-start;
  margin: 7px 0 0 20px;
  border-bottom: 2px solid #cacaca;
}
.list-tabs button {
  width: 40px;
  height: 44px;
  padding-bottom: 5px;
}
.list-tabs .active {
  height: 46px;
  margin-bottom: -2px;
  border-bottom: 4px solid #0079c1;
}
.contents h3 {
  margin: 13px 0 4px 20px;
  font-size: 18px;
  font-weight: 700;
  line-height: 26px;
}
.toc-item {
  display: flex;
  gap: 4px;
  align-items: center;
  padding-left: 3px;
}
.toc-item button {
  flex: 1;
  gap: 7px;
  justify-content: flex-start;
  height: 31px;
  border: 1px solid #0079c1;
  background: #c5dbee;
}

.mapview {
  position: relative;
  display: flex;
  flex: 1;
  flex-direction: column;
  min-width: 0;
}
.view-tabs {
  display: flex;
  flex: none;
  justify-content: space-between;
  height: 29px;
  border-bottom: 3px solid #d7d7d7;
}
.view-tab {
  display: flex;
  gap: 7px;
  align-items: center;
  padding: 0 8px 0 7px;
  background: #c8c8c8;
  color: #666;
}
.view-tab button svg {
  width: 11px;
}
.view-tab button {
  padding-left: 3px;
  color: #777;
}
.views {
  padding: 4px 5px 0;
  color: #555;
}
.canvas {
  flex: 1;
  border: solid #d2d2d2;
  border-width: 0 1px;
  background: #fff;
}
.status {
  display: flex;
  flex: none;
  align-items: center;
  height: 31px;
  padding: 0 8px 0 6px;
  border: 1px solid #d2d2d2;
  border-top: 0;
  background: #f7f9f8;
}
.status > i {
  width: 1px;
  height: 19px;
  margin: 0 8px;
  background: #999;
}
.scale {
  display: flex;
  align-items: center;
  width: 124px;
  height: 28px;
  padding: 0 6px;
  border: 1px solid #999;
  background: #fff;
}
.scale select {
  flex: 1;
  min-width: 0;
  padding: 0;
  border: 0;
  background: none;
  color: inherit;
  font: inherit;
  appearance: none;
}
.tools {
  display: flex;
  gap: 8px;
}
.coords {
  display: flex;
  flex: 1;
  justify-content: flex-end;
  min-width: 0;
  margin-right: 14px;
  margin-left: 4px;
  overflow: hidden;
  white-space: nowrap;
}
.count {
  gap: 4px;
  color: #999;
}
.dialog {
  position: absolute;
  top: 127px;
  left: 101px;
  display: flex;
  flex-direction: column;
  width: 488px;
  height: 488px;
  padding: 11px 11px 12px 12px;
  border: 1px solid #0079c1;
  background: #f7f9f8;
  box-shadow: 0 2px 10px rgba(0, 0, 0, 0.35);
}
.dialog header {
  display: flex;
  align-items: center;
  justify-content: center;
  height: 34px;
}
.dialog header h2 {
  flex: 1;
  padding-right: 14px;
  color: #0079c1;
  font-size: 18px;
  font-weight: 300;
  text-align: center;
}
.dialog header button {
  width: 16px;
  padding-top: 4px;
}
.dialog header svg {
  width: 12px;
}
.dialog h3 {
  margin: 15px 0 11px;
  color: #555;
  font-size: 16px;
  font-weight: 700;
  line-height: 22px;
}
.table-box {
  flex: 1;
  padding: 1px 1px 0 0;
  border: 1px solid #c8c8c8;
}
table {
  width: 460px;
  border-spacing: 0;
  font-size: 14px;
  line-height: 20px;
  table-layout: fixed;
}
th {
  height: 27px;
  padding: 0 0 0 8px;
  border-right: 1px solid #c8c8c8;
  border-bottom: 2px solid #c8c8c8;
  background: #dedede;
  font-weight: 400;
  text-align: left;
}
td {
  height: 25px;
  padding: 0;
  border-right: 1px solid #dcdcdc;
  border-bottom: 1px solid #dcdcdc;
  background: #fff;
  text-align: center;
}
th:not(.name) {
  width: 50px;
}
th.hot {
  background: #a0d3f2;
}
td.name {
  padding: 0 0 2px 4px;
  font-size: 12px;
  text-align: left;
}
td input {
  position: relative;
  display: block;
  width: 17px;
  height: 17px;
  margin: 0 auto 5px;
  border: 1px solid #777;
  appearance: none;
}
td input:checked::after {
  position: absolute;
  top: 1px;
  left: 5px;
  width: 5px;
  height: 10px;
  border: solid #555;
  border-width: 0 2px 2px 0;
  transform: rotate(40deg);
  content: "";
}
td .focus {
  outline: 1px dotted #222;
}
.dialog footer {
  display: flex;
  gap: 12px;
  padding: 13px 0 0 12px;
}
.dialog footer button {
  width: 88px;
  height: 30px;
  border: 1px solid #444;
  background: #fff;
  color: #555;
}
.dialog footer .add {
  margin-right: auto;
}
.dialog footer .ok {
  border-color: #0078d7;
}
.mark-box {
  position: absolute;
  top: 83px;
  left: 249px;
  width: 240px;
  height: 73px;
  border: 4px solid #f00;
  filter: drop-shadow(2px 3px 2px rgba(0, 0, 0, 0.6));
  pointer-events: none;
}
.note {
  position: absolute;
  top: 164px;
  right: 0;
  left: 111px;
  color: #f00;
  font-size: 22px;
  line-height: 23px;
  text-align: center;
  white-space: nowrap;
  -webkit-text-stroke: 6px #fff;
  paint-order: stroke fill;
  filter: drop-shadow(2px 2px 1px rgba(0, 0, 0, 0.6));
  pointer-events: none;
}
.arrow {
  position: absolute;
  top: 358px;
  left: 185px;
  filter: drop-shadow(3px 2px 2px rgba(0, 0, 0, 0.6));
  pointer-events: none;
}

.sub-tabs {
  display: flex;
  gap: 12px;
  align-items: flex-start;
  font-size: 16px;
}
.sub-tabs button {
  height: 28px;
}
.sub-tabs .active {
  border-bottom: 2px solid #0079c1;
  font-weight: 700;
}
.sub-tabs .menu {
  margin-left: auto;
}
.catalog .sub-tabs {
  padding: 10px 9px 0 8px;
}
.geo .sub-tabs {
  align-items: center;
  padding: 17px 7px 0 12px;
}
.geo .menu {
  padding-top: 4px;
}
.catalog-search {
  display: flex;
  align-items: center;
  padding: 12px 6px 0 5px;
}
.prev {
  color: #aaa;
}
.home {
  width: 25px;
  height: 30px;
  margin-left: 5px;
  border: 1px solid #ddd;
  border-right: 0;
}
.tree {
  flex: 1;
  padding: 7px 6px 0 0;
  list-style: none;
}
.tree li {
  display: flex;
  align-items: center;
  height: 30px;
}
.twist {
  display: flex;
  flex: none;
  justify-content: center;
  width: 15px;
  padding-right: 4px;
}
.twist.opened {
  padding-right: 8px;
}
.tree li button {
  flex: 1;
  gap: 10px;
  justify-content: flex-start;
  height: 30px;
  padding-left: 2px;
  border: 1px solid transparent;
}
.tree .selected {
  border-color: #0079c1;
  background: #c5dbee;
}
.l0 { padding-left: 15px; }
.l1 { padding-left: 35px; }
.l2 { padding-left: 54px; }
.l3 { padding-left: 75px; }
.dock-tabs {
  display: flex;
  gap: 15px;
  padding: 0 7px;
  border-top: 1px solid #d2d2d2;
  background: #f1f1f1;
}
.dock-tabs button {
  height: 25px;
}
.dock-tabs .active {
  margin-left: -7px;
  padding: 0 0 0 7px;
  background: #f7f9f8;
  color: #0079c1;
}

.tool-head {
  display: flex;
  align-items: center;
  margin: 14px 7px 0 8px;
  color: #555;
}
.tool-head h3 {
  flex: 1;
  color: #444;
  font-size: 19px;
  line-height: 26px;
  text-align: center;
}
.params {
  display: flex;
  flex-direction: column;
  margin: 17px 9px 0 23px;
}
.params label {
  line-height: 21px;
}
.params input {
  width: 100%;
  height: 28px;
  margin-bottom: 4px;
  padding: 0 5px;
  border: 1px solid #a3a3a3;
  background: #fff;
  color: inherit;
  font: inherit;
}
.with-browse {
  display: flex;
  gap: 9px;
  align-items: flex-start;
}
.with-browse button {
  height: 28px;
  padding-right: 4px;
}
.run-row {
  display: flex;
  justify-content: flex-end;
  margin: auto 7px 7px 0;
}
.run {
  gap: 10px;
  height: 32px;
  padding: 0 5px 0 12px;
  border: 1px solid #555;
  background: #fff;
}
.run .mini {
  margin-left: 10px;
}
.done {
  display: flex;
  gap: 20px;
  align-items: center;
  height: 60px;
  margin: 0 0 1px 5px;
  padding: 0 13px 0 16px;
  background: #e1eedc;
}
.done > div {
  flex: 1;
  padding-top: 1px;
}
.done p {
  line-height: 25px;
}
.links {
  display: flex;
  gap: 9px;
}
.done a {
  color: #3c7a3a;
}
.done button {
  color: #666;
}
.done button svg {
  width: 11px;
}
.watermark {
  position: absolute;
  right: 1px;
  bottom: 9px;
  color: rgba(130, 130, 130, 0.7);
  font-size: 15px;
  pointer-events: none;
}
</style>
